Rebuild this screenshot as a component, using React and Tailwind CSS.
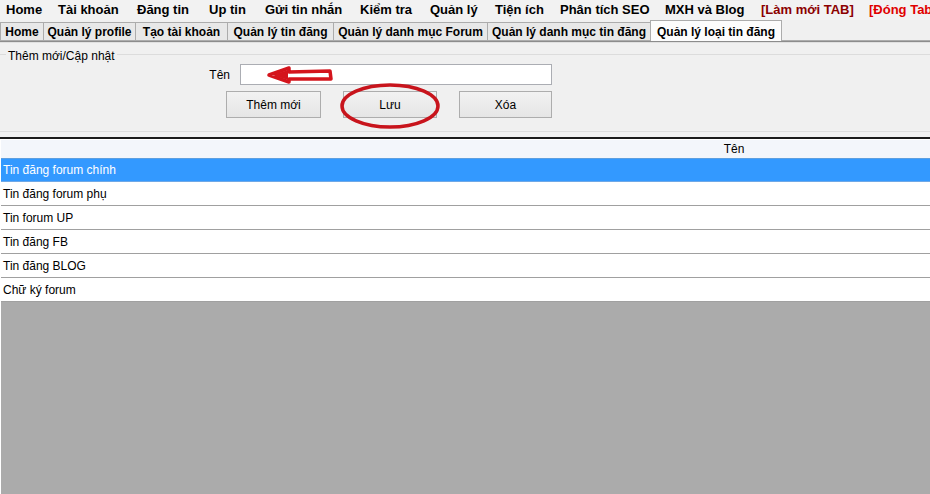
import React from "react";

const menu = [
  ["Home", 52],
  ["Tài khoản", 79],
  ["Đăng tin", 72],
  ["Up tin", 56],
  ["Gửi tin nhắn", 95],
  ["Kiểm tra", 70],
  ["Quản lý", 65],
  ["Tiện ích", 65],
  ["Phân tích SEO", 105],
  ["MXH và Blog", 96],
];

const tabs = [
  ["Home", 43],
  ["Quản lý profile", 92],
  ["Tạo tài khoản", 92],
  ["Quản lý tin đăng", 106],
  ["Quản lý danh mục Forum", 154],
  ["Quản lý danh mục tin đăng", 163],
];

const rows = [
  "Tin đăng forum chính",
  "Tin đăng forum phụ",
  "Tin forum UP",
  "Tin đăng FB",
  "Tin đăng BLOG",
  "Chữ ký forum",
];

export default function App() {
  return (
    <div
      className="relative w-[930px] h-[494px] overflow-hidden bg-[#f0f0f0] text-black"
      style={{ fontFamily: '"Liberation Sans", Arial, sans-serif' }}
    >
      {/* Menu bar */}
      <div className="flex items-center h-[20px] pl-[6px] bg-[#f2f2f2] text-[13px] font-bold whitespace-nowrap">
        {menu.map(([t, w]) => (
          <div key={t} className="shrink-0" style={{ width: w }}>
            {t}
          </div>
        ))}
        <div className="shrink-0 w-[108px] text-[#8b0000]">[Làm mới TAB]</div>
        <div className="shrink-0 text-[#e00000]">[Đóng Tab]</div>
      </div>

      {/* Tabs */}
      <div className="flex items-end h-[20px] text-[12px] font-bold whitespace-nowrap">
        {tabs.map(([t, w]) => (
          <div
            key={t}
            className="shrink-0 h-[18px] flex items-center justify-center border border-b-0 border-[#acacac] bg-[#e8e8e8] -mr-px"
            style={{ width: w + 1 }}
          >
            {t}
          </div>
        ))}
        <div className="shrink-0 w-[132px] h-[21px] flex items-start pt-[2px] justify-center border border-b-0 border-[#acacac] bg-[#fcfcfc] z-10 -mb-px">
          Quản lý loại tin đăng
        </div>
      </div>
      <div className="h-[3px] border-t border-[#acacac] bg-[#8c8c8c] border-b border-b-[#e0e0e0]" />

      {/* Group box */}
      <div className="relative h-[94px]">
        <div className="absolute left-[6px] top-[4px] px-[2px] text-[12px] bg-[#f0f0f0] z-10">
          Thêm mới/Cập nhật
        </div>
        <div className="absolute left-0 right-0 top-[11px] h-px bg-[#dcdcdc]" />
        <div className="absolute left-0 right-0 top-[88px] h-px bg-[#dcdcdc]" />
        <div className="pt-[21px] flex items-center">
          <div className="w-[240px] pr-[10px] text-right text-[12px]">Tên</div>
          <div className="w-[312px] h-[21px] bg-white border border-[#abadb3]" />
        </div>
        <div className="flex mt-[6px] pl-[226px] gap-[22px] text-[12px]">
          <div className="w-[95px] h-[27px] flex items-center justify-center border border-[#adadad] bg-gradient-to-b from-[#f2f2f2] to-[#e5e5e5]">
            Thêm mới
          </div>
          <div className="w-[94px] h-[27px] flex items-center justify-center border border-[#adadad] bg-gradient-to-b from-[#f2f2f2] to-[#e5e5e5]">
            Lưu
          </div>
          <div className="w-[93px] h-[27px] flex items-center justify-center border border-[#adadad] bg-gradient-to-b from-[#f2f2f2] to-[#e5e5e5]">
            Xóa
          </div>
        </div>
      </div>

      {/* Grid */}
      <div className="h-[2px] bg-[#1a1a1a]" />
      <div className="bg-[#ababab] h-[360px] border-l border-white">
        <div className="h-[19px] bg-[#f3f6fb] border-t border-white flex items-center text-[12px]">
          <div className="w-[733px]" />
          <div className="-translate-x-1/2">Tên</div>
        </div>
        {rows.map((r, i) => (
          <div
            key={r}
            className={
              i === 0
                ? "h-[24px] flex items-center pl-[2px] text-[12px] bg-[#3399ff] text-white border-t border-[#5d9fe0] border-b border-b-[#6fa8e6]"
                : "h-[24px] flex items-center pl-[2px] text-[12px] bg-white border-b border-[#a0a0a0]"
            }
          >
            {r}
          </div>
        ))}
      </div>

      {/* Red annotations */}
      <svg
        className="absolute left-0 top-0 pointer-events-none"
        width="930"
        height="494"
        viewBox="0 0 930 494"
      >
        <path
          d="M269 75 L289 68 L289 72 L330 71 L331 79 L289 79 L289 82 Z"
          fill="none"
          stroke="#d4141c"
          strokeWidth="3.5"
          strokeLinejoin="round"
        />
        <path d="M272 75 L288 70 L288 80 Z" fill="#d4141c" />
        <ellipse
          cx="390"
          cy="106"
          rx="48"
          ry="21"
          fill="none"
          stroke="#c8141c"
          strokeWidth="3.5"
        />
      </svg>
    </div>
  );
}
